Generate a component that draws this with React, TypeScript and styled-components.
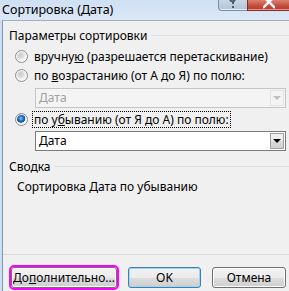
import React from "react";
import styled, { createGlobalStyle } from "styled-components";

const Global = createGlobalStyle`
  html, body { margin: 0; padding: 0; }
  body {
    width: 289px; height: 291px; overflow: hidden; background: #f0f0f0;
    font-family: "Noto Sans", "Open Sans", "DejaVu Sans", sans-serif;
    color: #000;
  }
`;

const Window = styled.div`
  width: 289px; height: 291px; display: flex; flex-direction: column;
  background: #f0f0f0; overflow: hidden;
`;

const TitleBar = styled.div`
  height: 20px; flex: none; display: flex; align-items: flex-start;
  background: linear-gradient(#cfe0f4, #dbe8f6);
`;

const Title = styled.div`
  flex: 1; font-size: 12.5px; line-height: 20px; padding-left: 2px; white-space: nowrap;
`;

const CaptionButton = styled.div<{ $variant: "help" | "close" }>`
  height: 11px; box-sizing: border-box; overflow: hidden; flex: none;
  display: flex; justify-content: center; align-items: flex-end;
  width: ${(p) => (p.$variant === "help" ? "29px" : "42px")};
  border: 1px solid ${(p) => (p.$variant === "help" ? "#7d8ea3" : "#8a2b22")};
  border-top: none;
  border-right: none;
  border-radius: ${(p) => (p.$variant === "help" ? "0 0 0 4px" : "0")};
  background: ${(p) =>
    p.$variant === "help"
      ? "linear-gradient(#c9d6e5, #b3c3d6)"
      : "linear-gradient(#d9826f, #c44a3c 60%, #b8382b)"};
  box-shadow: inset 0 -1px 0 ${(p) => (p.$variant === "help" ? "#e6eef7" : "#e79a8a")};
`;

const Frame = styled.div`
  flex: 1; display: flex; min-height: 0;
  border-left: 2px solid #cddff3;
`;

const Client = styled.div`
  flex: 1; display: flex; flex-direction: column; min-width: 0;
  border-left: 1px solid #8396ad; border-top: 1px solid #a3afbd;
  padding: 6px 0 3px 0;
`;

const GroupHeader = styled.div<{ $top?: number }>`
  display: flex; align-items: center; height: 16px; padding-left: 6px;
  margin-top: ${(p) => p.$top ?? 0}px;
  font-size: 12px; white-space: nowrap;
  &::after { content: ""; flex: 1; height: 1px; background: #d5dfe5; margin-left: 4px; }
`;

const RadioRow = styled.label<{ $top?: number }>`
  display: flex; align-items: center; height: 19px; padding-left: 12px;
  margin-top: ${(p) => p.$top ?? 0}px;
  font-size: 12px; white-space: nowrap;
`;

const RadioCircle = styled.span<{ $checked?: boolean }>`
  width: 13px; height: 13px; box-sizing: border-box; border-radius: 50%; flex: none;
  border: 1px solid #8f8f8f; margin-right: 5px;
  background: ${(p) =>
    p.$checked
      ? "radial-gradient(circle at 45% 40%, #8fd0ff 0, #2e7fd6 2px, #0c4aa0 4px, #e9e9e9 4.5px, #fdfdfd 6px)"
      : "radial-gradient(circle at 40% 35%, #c9c9c9 0, #dcdcdc 3px, #f4f4f4 5.5px, #fafafa 6px)"};
  box-shadow: inset 0 0 0 1px #f7f7f7;
`;

const Label = styled.span<{ $focused?: boolean }>`
  line-height: 15px; padding: 0 1px;
  outline: ${(p) => (p.$focused ? "1px dotted #000" : "none")};
  outline-offset: 0;
`;

const Combo = styled.div<{ $disabled?: boolean; $top?: number }>`
  margin-left: 32px; margin-top: ${(p) => p.$top ?? 0}px;
  width: 251px; height: 20px; box-sizing: border-box; display: flex;
  border: 1px solid ${(p) => (p.$disabled ? "#c5c5c5" : "#7b7b7b")};
  background: ${(p) => (p.$disabled ? "#f4f4f4" : "#fff")};
`;

const ComboText = styled.span<{ $disabled?: boolean }>`
  flex: 1; padding-left: 3px; font-size: 12px; line-height: 18px;
  color: ${(p) => (p.$disabled ? "#a0a0a0" : "#000")};
`;

const ComboButton = styled.span<{ $disabled?: boolean }>`
  width: 14px; margin: 1px; box-sizing: border-box; display: flex;
  align-items: center; justify-content: center;
  border: 1px solid ${(p) => (p.$disabled ? "#e2e2e2" : "#a0a0a0")};
  background: ${(p) =>
    p.$disabled ? "#f4f4f4" : "linear-gradient(#f2f2f2, #ebebeb 50%, #dcdcdc 50%, #cfcfcf)"};
  &::after {
    content: ""; width: 0; height: 0;
    border-left: 4px solid transparent; border-right: 4px solid transparent;
    border-top: 4px solid ${(p) => (p.$disabled ? "#c0c0c0" : "#000")};
  }
`;

const Summary = styled.div`
  padding-left: 14px; margin-top: 5px; font-size: 12px; line-height: 16px; white-space: nowrap;
`;

const Separator = styled.div`
  margin-top: auto; height: 1px; background: #dcdcdc;
`;

const ButtonRow = styled.div`
  display: flex; gap: 11px; padding-left: 8px; margin-top: 12px;
`;

const Button = styled.button<{ $w: number; $default?: boolean; $marked?: boolean }>`
  width: ${(p) => p.$w}px; height: 21px; box-sizing: border-box; padding: 0;
  font-family: inherit; font-size: 12px; color: #000;
  border: 1px solid ${(p) => (p.$default ? "#3c7fb1" : "#707070")};
  border-radius: 3px;
  background: linear-gradient(#f2f2f2, #ebebeb 50%, #dddddd 50%, #cfcfcf);
  box-shadow: inset 0 0 0 1px ${(p) => (p.$default ? "#9fd4f3" : "#fcfcfc")};
  outline: ${(p) => (p.$marked ? "2px solid #ff00ff" : "none")};
`;

export default function App() {
  return (
    <>
      <Global />
      <Window>
        <TitleBar>
          <Title>Сортировка (Дата)</Title>
          <CaptionButton $variant="help">
            <svg width="10" height="10" viewBox="0 0 10 10">
              <path d="M2 -1 C2 2 7 2 7 -1 M5 1.5 L5 4" stroke="#4a5a70" strokeWidth="2" fill="none" />
              <rect x="4" y="6" width="2" height="2" fill="#4a5a70" />
            </svg>
          </CaptionButton>
          <CaptionButton $variant="close">
            <svg width="12" height="10" viewBox="0 0 12 10">
              <path d="M0 8 L10 -2 M2 -2 L12 8" stroke="#fff" strokeWidth="2.4" fill="none" />
            </svg>
          </CaptionButton>
        </TitleBar>
        <Frame>
          <Client>
            <GroupHeader>Параметры сортировки</GroupHeader>
            <RadioRow $top={4}>
              <RadioCircle />
              <Label>
                вручну<u>ю</u> (разрешается перетаскивание)
              </Label>
            </RadioRow>
            <RadioRow>
              <RadioCircle />
              <Label>
                по <u>в</u>озрастанию (от А до Я) по полю:
              </Label>
            </RadioRow>
            <Combo $disabled $top={3}>
              <ComboText $disabled>Дата</ComboText>
              <ComboButton $disabled />
            </Combo>
            <RadioRow $top={2}>
              <RadioCircle $checked />
              <Label $focused>
                по у<u>б</u>ыванию (от Я до А) по полю:
              </Label>
            </RadioRow>
            <Combo $top={2}>
              <ComboText>Дата</ComboText>
              <ComboButton />
            </Combo>
            <GroupHeader $top={7}>Сводка</GroupHeader>
            <Summary>Сортировка Дата по убыванию</Summary>
            <Separator />
            <ButtonRow>
              <Button $w={106} $marked>
                До<u>п</u>олнительно...
              </Button>
              <Button $w={73} $default>
                OK
              </Button>
              <Button $w={74}>Отмена</Button>
            </ButtonRow>
          </Client>
        </Frame>
      </Window>
    </>
  );
}
